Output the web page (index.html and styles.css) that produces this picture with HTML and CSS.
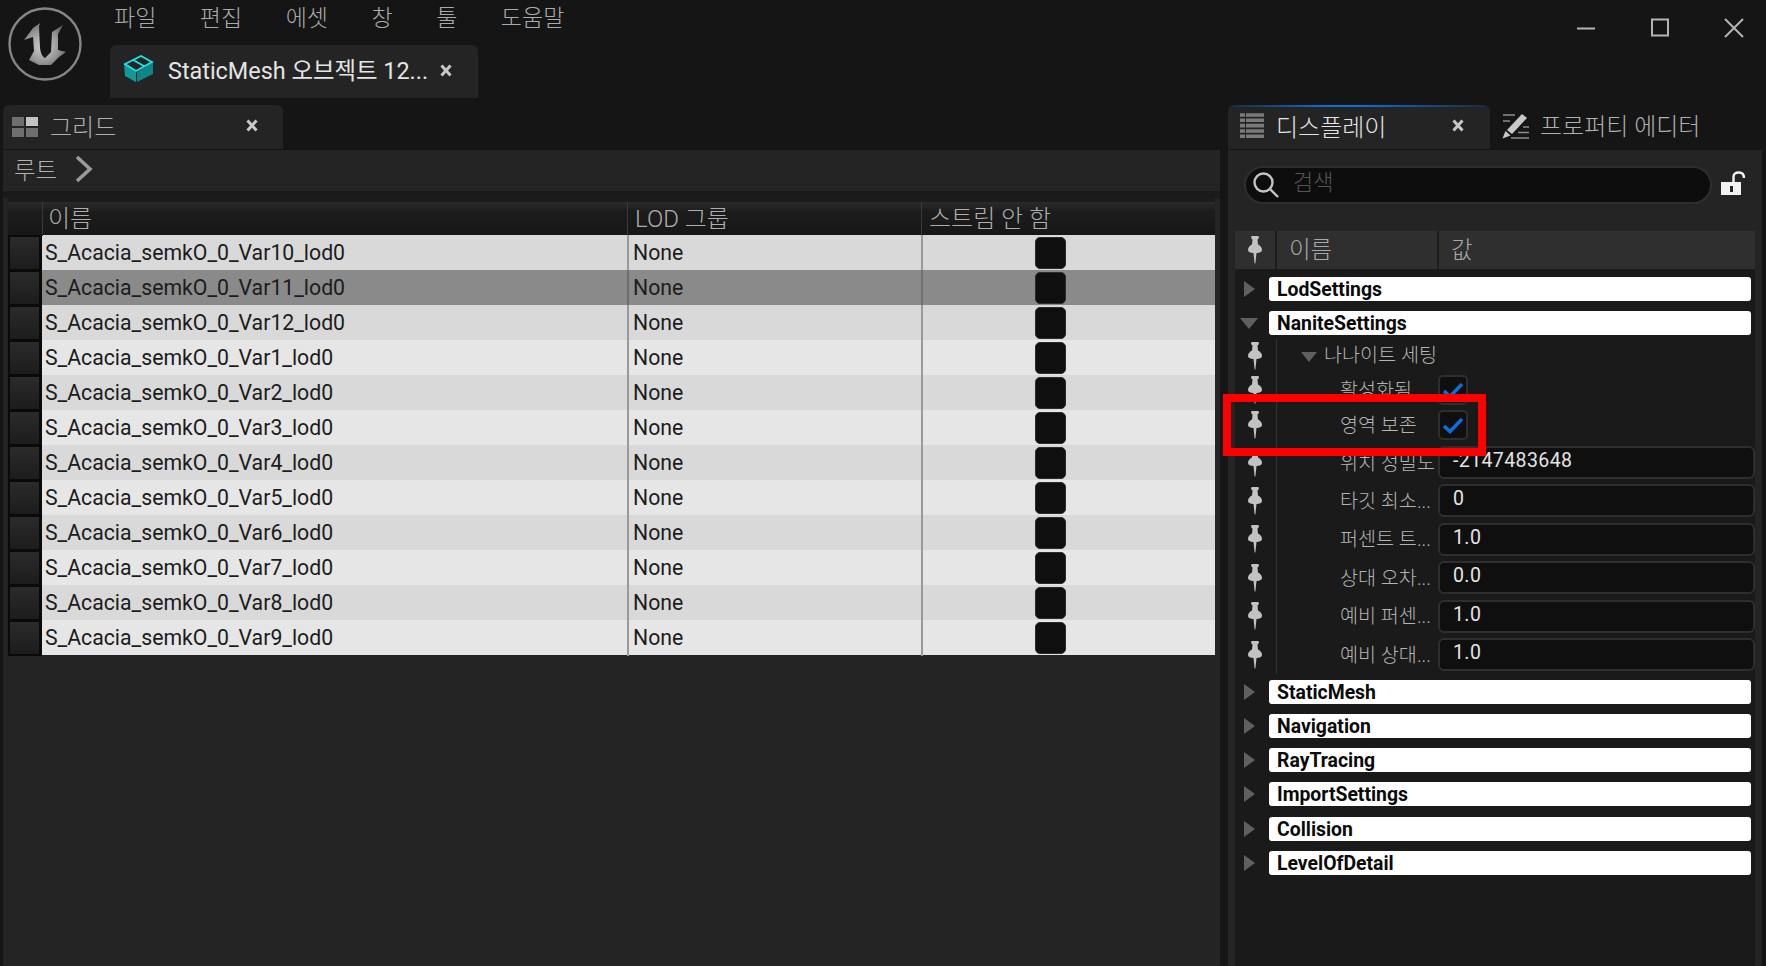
FILE: index.html
```html
<!DOCTYPE html>
<html lang="ko">
<head>
<meta charset="utf-8">
<title>StaticMesh 오브젝트</title>
<link rel="stylesheet" href="styles.css">
</head>
<body>
<div class="app">
  <header class="titlebar">
    <div class="logo">
      <svg width="74" height="74" viewBox="7 7 74 74">
        <defs>
          <radialGradient id="ug" cx="0.45" cy="0.55" r="0.6">
            <stop offset="0" stop-color="#d2d2d2"/>
            <stop offset="0.6" stop-color="#9a9a9a"/>
            <stop offset="1" stop-color="#686868"/>
          </radialGradient>
        </defs>
        <circle cx="44" cy="44" r="35.5" fill="none" stroke="#858585" stroke-width="2.4"/>
        <path fill="url(#ug)" d="M23 40 L32 28 L39 23 L38 27 L39 48 Q40 56 44 58 L50 52 L51 32 L62 25 L57 34 L57 50 L65 52 L58 57 L50 65 L38 65 L28 60 L33 51 L32 37 Z"/>
      </svg>
    </div>
    <div class="title-main">
      <nav class="menu">
        <span class="menu-item">파일</span>
        <span class="menu-item">편집</span>
        <span class="menu-item">에셋</span>
        <span class="menu-item">창</span>
        <span class="menu-item">툴</span>
        <span class="menu-item">도움말</span>
      </nav>
      <div class="doc-tab">
        <svg class="doc-icon" width="32" height="32" viewBox="12 12 32 32">
          <path fill="#129a9a" d="M14 23 L26 31 L26 41 L15 35 Z"/>
          <path fill="#0f8686" d="M27 31 L43 21 L43 33 L27 41 Z"/>
          <path fill="none" stroke="#1fe6e6" stroke-width="1.8" d="M15 23 L31 15 L42 21 L26 30 Z M23 19 L34 25"/>
        </svg>
        <span class="doc-title">StaticMesh 오브젝트 12...</span>
        <svg class="x-icon doc-x" width="12" height="13" viewBox="0 0 12 13"><path d="M1.5 1.5 L10.5 11.5 M10.5 1.5 L1.5 11.5"/></svg>
      </div>
    </div>
    <div class="win-controls">
      <svg class="win-icon" width="20" height="20" viewBox="0 0 20 20"><path d="M1 10.5 H19"/></svg>
      <svg class="win-icon" width="20" height="20" viewBox="0 0 20 20"><rect x="2" y="1.5" width="16" height="16"/></svg>
      <svg class="win-icon" width="20" height="20" viewBox="0 0 20 20"><path d="M1 1 L19 19 M19 1 L1 19"/></svg>
    </div>
  </header>

  <main class="workspace">
    <section class="panel panel-left">
      <div class="tab-strip">
        <div class="tab tab-grid">
          <svg class="grid-icon" width="26" height="20" viewBox="0 0 26 20">
            <rect x="0" y="0" width="12" height="9" fill="#6f6f6f"/>
            <rect x="14" y="0" width="12" height="9" fill="#c4c4c4"/>
            <rect x="0" y="11" width="12" height="9" fill="#6f6f6f"/>
            <rect x="14" y="11" width="12" height="9" fill="#6f6f6f"/>
          </svg>
          <span class="tab-label tab-label-dim">그리드</span>
          <svg class="x-icon tab-x" width="12" height="13" viewBox="0 0 12 13"><path d="M1.5 1.5 L10.5 11.5 M10.5 1.5 L1.5 11.5"/></svg>
        </div>
      </div>
      <div class="crumb">
        <span class="crumb-text">루트</span>
        <svg class="crumb-chevron" width="18" height="28" viewBox="0 0 18 28"><path d="M2 2 L15 14 L2 26"/></svg>
      </div>
      <div class="table-wrap">
        <div class="table">
          <div class="thead">
            <div class="th th-index"></div>
            <div class="th th-name">이름</div>
            <div class="th">LOD 그룹</div>
            <div class="th">스트림 안 함</div>
          </div>
          <div class="row"><div class="idx"></div><div class="cell name">S_Acacia_semkO_0_Var10_lod0</div><div class="cell lod">None</div><div class="cell box"><span class="cbx"></span></div></div>
          <div class="row row-selected"><div class="idx"></div><div class="cell name">S_Acacia_semkO_0_Var11_lod0</div><div class="cell lod">None</div><div class="cell box"><span class="cbx"></span></div></div>
          <div class="row"><div class="idx"></div><div class="cell name">S_Acacia_semkO_0_Var12_lod0</div><div class="cell lod">None</div><div class="cell box"><span class="cbx"></span></div></div>
          <div class="row"><div class="idx"></div><div class="cell name">S_Acacia_semkO_0_Var1_lod0</div><div class="cell lod">None</div><div class="cell box"><span class="cbx"></span></div></div>
          <div class="row"><div class="idx"></div><div class="cell name">S_Acacia_semkO_0_Var2_lod0</div><div class="cell lod">None</div><div class="cell box"><span class="cbx"></span></div></div>
          <div class="row"><div class="idx"></div><div class="cell name">S_Acacia_semkO_0_Var3_lod0</div><div class="cell lod">None</div><div class="cell box"><span class="cbx"></span></div></div>
          <div class="row"><div class="idx"></div><div class="cell name">S_Acacia_semkO_0_Var4_lod0</div><div class="cell lod">None</div><div class="cell box"><span class="cbx"></span></div></div>
          <div class="row"><div class="idx"></div><div class="cell name">S_Acacia_semkO_0_Var5_lod0</div><div class="cell lod">None</div><div class="cell box"><span class="cbx"></span></div></div>
          <div class="row"><div class="idx"></div><div class="cell name">S_Acacia_semkO_0_Var6_lod0</div><div class="cell lod">None</div><div class="cell box"><span class="cbx"></span></div></div>
          <div class="row"><div class="idx"></div><div class="cell name">S_Acacia_semkO_0_Var7_lod0</div><div class="cell lod">None</div><div class="cell box"><span class="cbx"></span></div></div>
          <div class="row"><div class="idx"></div><div class="cell name">S_Acacia_semkO_0_Var8_lod0</div><div class="cell lod">None</div><div class="cell box"><span class="cbx"></span></div></div>
          <div class="row"><div class="idx"></div><div class="cell name">S_Acacia_semkO_0_Var9_lod0</div><div class="cell lod">None</div><div class="cell box"><span class="cbx"></span></div></div>
        </div>
      </div>
    </section>

    <section class="panel panel-right">
      <div class="tab-strip">
        <div class="tab tab-display">
          <svg class="list-icon" width="24" height="26" viewBox="0 0 24 26">
            <path d="M0 2 H24 M0 7.3 H24 M0 12.6 H24 M0 18 H24 M0 23.3 H24"/>
            <path class="list-gap" d="M5.5 0 V26"/>
          </svg>
          <span class="tab-label">디스플레이</span>
          <svg class="x-icon tab-x" width="12" height="13" viewBox="0 0 12 13"><path d="M1.5 1.5 L10.5 11.5 M10.5 1.5 L1.5 11.5"/></svg>
        </div>
        <div class="tab-plain">
          <svg class="edit-icon" width="30" height="30" viewBox="10 10 30 30">
            <path fill="#c8c8c8" d="M17 30 L32 14 L37 18 L22 34 Z"/>
            <path fill="#c8c8c8" d="M12.5 38.5 L15.5 31 L20.5 35.5 Z"/>
            <path class="edit-lines" d="M13 15 H25 M13 21 H20 M33 27 H39 M28 32.5 H39 M21 38 H39"/>
          </svg>
          <span class="tab-label tab-label-dim">프로퍼티 에디터</span>
        </div>
      </div>
      <div class="details">
        <div class="search-row">
          <div class="search">
            <svg class="search-icon" width="26" height="26" viewBox="0 0 26 26"><circle cx="10.5" cy="10.5" r="9"/><path d="M17 17 L25 25"/></svg>
            <span class="search-text">검색</span>
          </div>
          <svg class="lock" width="26" height="26" viewBox="0 0 26 26">
            <path class="lock-shackle" d="M13.5 11 V6 Q13.5 1.5 19 1.5 Q24 1.5 24 7"/>
            <path fill="#f2f2f2" d="M1 11 H21 V24 H1 Z"/>
            <rect x="10" y="15" width="3" height="6" fill="#242424"/>
          </svg>
        </div>
        <div class="prop-head">
          <div class="ph ph-pin">
            <svg class="pin" viewBox="0 0 16 28"><use href="#pin-shape"/></svg>
          </div>
          <div class="ph ph-name">이름</div>
          <div class="ph ph-value">값</div>
        </div>
        <div class="prop-list">
          <svg class="pin-defs" width="0" height="0">
            <symbol id="pin-shape" viewBox="0 0 16 28">
              <path d="M4.5 0 H11.5 L12 2 L10.5 3.5 L11 8.5 Q15 10.5 15 14 Q15 16.5 9.5 17 L8.4 27.5 H7.6 L6.5 17 Q1 16.5 1 14 Q1 10.5 5 8.5 L5.5 3.5 L4 2 Z"/>
            </symbol>
          </svg>
          <div class="cat"><span class="arrow arrow-right"></span><div class="cat-box">LodSettings</div></div>
          <div class="cat"><span class="arrow arrow-down"></span><div class="cat-box">NaniteSettings</div></div>
          <div class="group">
            <div class="prop prop-h34">
              <div class="pin-col"><svg class="pin" viewBox="0 0 16 28"><use href="#pin-shape"/></svg></div>
              <div class="prop-name group-name"><span class="arrow arrow-down arrow-small"></span>나나이트 세팅</div>
            </div>
            <div class="prop prop-h34">
              <div class="pin-col"><svg class="pin" viewBox="0 0 16 28"><use href="#pin-shape"/></svg></div>
              <div class="prop-name">활성화됨</div>
              <div class="check"><svg width="22" height="18" viewBox="0 0 22 18"><path d="M2 10 L8 15.5 L20 3"/></svg></div>
            </div>
            <div class="prop prop-h36">
              <div class="pin-col"><svg class="pin" viewBox="0 0 16 28"><use href="#pin-shape"/></svg></div>
              <div class="prop-name">영역 보존</div>
              <div class="check"><svg width="22" height="18" viewBox="0 0 22 18"><path d="M2 10 L8 15.5 L20 3"/></svg></div>
            </div>
            <div class="prop">
              <div class="pin-col"><svg class="pin" viewBox="0 0 16 28"><use href="#pin-shape"/></svg></div>
              <div class="prop-name">위치 정밀도</div>
              <div class="field">-2147483648</div>
            </div>
            <div class="prop">
              <div class="pin-col"><svg class="pin" viewBox="0 0 16 28"><use href="#pin-shape"/></svg></div>
              <div class="prop-name">타깃 최소...</div>
              <div class="field">0</div>
            </div>
            <div class="prop">
              <div class="pin-col"><svg class="pin" viewBox="0 0 16 28"><use href="#pin-shape"/></svg></div>
              <div class="prop-name">퍼센트 트...</div>
              <div class="field">1.0</div>
            </div>
            <div class="prop">
              <div class="pin-col"><svg class="pin" viewBox="0 0 16 28"><use href="#pin-shape"/></svg></div>
              <div class="prop-name">상대 오차...</div>
              <div class="field">0.0</div>
            </div>
            <div class="prop">
              <div class="pin-col"><svg class="pin" viewBox="0 0 16 28"><use href="#pin-shape"/></svg></div>
              <div class="prop-name">예비 퍼센...</div>
              <div class="field">1.0</div>
            </div>
            <div class="prop">
              <div class="pin-col"><svg class="pin" viewBox="0 0 16 28"><use href="#pin-shape"/></svg></div>
              <div class="prop-name">예비 상대...</div>
              <div class="field">1.0</div>
            </div>
          </div>
          <div class="cat"><span class="arrow arrow-right"></span><div class="cat-box">StaticMesh</div></div>
          <div class="cat"><span class="arrow arrow-right"></span><div class="cat-box">Navigation</div></div>
          <div class="cat"><span class="arrow arrow-right"></span><div class="cat-box">RayTracing</div></div>
          <div class="cat"><span class="arrow arrow-right"></span><div class="cat-box">ImportSettings</div></div>
          <div class="cat"><span class="arrow arrow-right"></span><div class="cat-box">Collision</div></div>
          <div class="cat"><span class="arrow arrow-right"></span><div class="cat-box">LevelOfDetail</div></div>
        </div>
      </div>
    </section>
  </main>
  <div class="highlight"></div>
</div>
</body>
</html>
```

FILE: styles.css
```css
* { box-sizing: border-box; }
html, body {
  margin: 0;
  height: 100%;
  background: #151515;
  overflow: hidden;
}
body {
  font-family: Roboto, "Noto Sans CJK KR", sans-serif;
  color: #c0c0c0;
}
.app {
  position: relative;
  width: 1766px;
  height: 966px;
  display: flex;
  flex-direction: column;
  overflow: hidden;
}

/* Title bar */
.titlebar {
  height: 105px;
  flex: none;
  display: flex;
  padding-top: 7px;
}
.logo { width: 110px; flex: none; padding-left: 8px; }
.logo svg { display: block; }
.title-main {
  width: 368px;
  flex: none;
  margin-top: -7px;
  display: flex;
  flex-direction: column;
}
.menu {
  height: 45px;
  flex: none;
  display: flex;
  padding-left: 4px;
  gap: 43.5px;
  align-items: flex-start;
}
.menu-item {
  flex: none;
  font-size: 23px;
  line-height: 38px;
  font-weight: 300;
  color: #aaa;
  white-space: nowrap;
}
.doc-tab {
  height: 53px;
  background: #242424;
  border-radius: 6px 6px 0 0;
  display: flex;
  align-items: center;
  padding: 0 26px 6px 12px;
}
.doc-icon { flex: none; }
.doc-title {
  margin-left: 14px;
  font-size: 23.4px;
  color: #e4e4e4;
  white-space: nowrap;
  flex: 1;
}
.doc-title, .tab-label { font-weight: 400; }
.doc-x { margin-top: 4px; }
.x-icon path {
  fill: none;
  stroke: #c8c8c8;
  stroke-width: 3;
}
.win-controls {
  margin-left: auto;
  margin-top: 11px;
  padding-right: 22px;
  display: flex;
  gap: 54px;
  align-items: flex-start;
}
.win-icon { fill: none; stroke: #b4b4b4; stroke-width: 2; }

/* Workspace */
.workspace {
  flex: 1;
  display: flex;
  padding-left: 3px;
  gap: 8px;
  min-height: 0;
}
.panel { display: flex; flex-direction: column; }
.panel-left { width: 1217px; }
.panel-right { width: 534px; }
.tab-strip {
  height: 45px;
  flex: none;
  display: flex;
  padding-bottom: 1px;
}
.tab {
  width: 280px;
  background: #242424;
  border-radius: 6px 6px 0 0;
  display: flex;
  align-items: center;
  padding: 0 25px 3px 9px;
}
.tab-grid .grid-icon { margin-top: 3px; }
.tab-label {
  font-size: 24px;
  font-weight: 300;
  color: #e4e4e4;
  margin-left: 12px;
  flex: 1;
  white-space: nowrap;
}
.tab-label-dim { color: #b0b0b0; }
.tab-x { flex: none; }
.tab-display {
  width: 262px;
  padding: 0 26px 3px 12px;
  background: linear-gradient(to right, #1d2a38, #0a70e0 38%, #0a70e0 50%, #1d2a38) top/100% 2px no-repeat, #242424;
}
.list-icon { flex: none; }
.list-icon path { fill: none; stroke: #7a7a7a; stroke-width: 3.6; }
.list-icon .list-gap { stroke: #242424; stroke-width: 1; }
.tab-plain {
  display: flex;
  align-items: center;
  padding: 0 0 5px 10px;
  height: 44px;
}
.edit-lines { fill: none; stroke: #8c8c8c; stroke-width: 1.6; }
.tab-plain .tab-label { margin-left: 10px; }

/* Left panel */
.crumb {
  height: 41px;
  flex: none;
  background: #242424;
  display: flex;
  align-items: center;
  padding: 0 0 4px 11px;
}
.crumb-text { font-size: 23.5px; font-weight: 300; color: #b0b0b0; }
.crumb-chevron { margin-left: 18px; fill: none; stroke: #9a9a9a; stroke-width: 3.6; }
.table-wrap {
  flex: 1;
  background: #242424;
  border-top: 7px solid #1a1a1a;
  padding: 0 5px 0 5px;
}
.table {
  background: #1c1c1c;
  padding-top: 4px;
}
.thead, .row {
  display: grid;
  grid-template-columns: 34px 585px 294px 294px;
}
.thead {
  height: 33px;
  background: linear-gradient(#2b2b2b, #1c1c1c 30%, #171717);
}
.th {
  font-size: 24px;
  font-weight: 300;
  line-height: 34px;
  color: #aeaeae;
  padding-left: 7px;
  border-left: 1px solid #3a3a3a;
}
.th-name { padding-left: 5px; }
.th-index { border-left: 0; border-right: 0; }
.row {
  height: 35px;
  background: #d9d9d9;
  color: #1c1c1c;
}
.row:nth-child(odd) { background: #e6e6e6; }
.row.row-selected { background: #8a8a8a; }
.idx {
  background: linear-gradient(#2b2b2b, #1c1c1c);
  border: 2px solid #0a0a0a;
  border-right-width: 3px;
}
.cell {
  font-size: 21.25px;
  line-height: 36px;
  white-space: nowrap;
}
.name { padding-left: 3px; }
.lod { padding-left: 4px; border-left: 2px solid #9a9a9a; }
.box {
  border-left: 2px solid #9a9a9a;
  display: flex;
  justify-content: center;
  align-items: center;
  padding-right: 37px;
}
.row-selected .lod, .row-selected .box { border-left-color: #6e6e6e; }
.cbx {
  width: 31px;
  height: 32px;
  background: #0f0f0f;
  border: 1px solid #2c2c2c;
  border-radius: 5px;
}

/* Right panel */
.details {
  flex: 1;
  background: #242424;
  padding: 0 7px 0 7px;
  display: flex;
  flex-direction: column;
  min-height: 0;
}
.search-row {
  height: 81px;
  flex: none;
  display: flex;
  padding: 16px 9px 0 9px;
  align-items: flex-start;
}
.search {
  width: 469px;
  height: 38px;
  background: #0d0d0d;
  border: 2px solid #2e2e2e;
  border-radius: 19px;
  display: flex;
  align-items: center;
  padding-left: 7px;
}
.search-icon { flex: none; fill: none; stroke: #c4c4c4; stroke-width: 2.4; }
.search-text {
  font-size: 22px;
  font-weight: 300;
  color: #555;
  margin-left: 14px;
  line-height: 30px;
  margin-top: -5px;
}
.lock { margin: 5px 0 0 8px; flex: none; }
.lock-shackle { fill: none; stroke: #f2f2f2; stroke-width: 2.4; }
.prop-head {
  height: 38px;
  flex: none;
  background: #2f2f2f;
  display: grid;
  grid-template-columns: 42px 162px 1fr;
}
.ph {
  font-size: 23.5px;
  font-weight: 300;
  color: #a8a8a8;
  line-height: 38px;
  padding-left: 12px;
  border-right: 2px solid #1e1e1e;
}
.ph-value { border-right: 0; padding-left: 12px; }
.ph-pin { padding-left: 12px; display: flex; align-items: center; }
.pin { width: 16px; height: 28px; fill: #c2c2c2; display: block; }
.pin-defs { position: absolute; }
.prop-list {
  flex: 1;
  background: #1a1a1a;
  padding-top: 3px;
}
.cat {
  height: 34.2px;
  display: flex;
  align-items: center;
}
.arrow { display: block; flex: none; width: 0; height: 0; }
.arrow-right {
  margin: 0 14px 0 9px;
  border-left: 11px solid #606060;
  border-top: 8.5px solid transparent;
  border-bottom: 8.5px solid transparent;
}
.arrow-down {
  margin: 0 11px 0 5px;
  border-top: 11px solid #606060;
  border-left: 9px solid transparent;
  border-right: 9px solid transparent;
}
.arrow-small {
  margin: 1px 7px 0 -39px;
  border-top-width: 10px;
  border-left-width: 8px;
  border-right-width: 8px;
}
.cat-box {
  height: 24px;
  flex: none;
  width: 482px;
  background: #fff;
  border-radius: 3px;
  color: #0a0a0a;
  font-size: 19.4px;
  font-weight: 700;
  line-height: 26px;
  padding-left: 8px;
  white-space: nowrap;
}
.group { margin: -1px 0 1px; }
.prop {
  height: 38.4px;
  display: grid;
  grid-template-columns: 42px 161px 317px;
  align-items: center;
}
.prop-h34 { height: 34px; }
.prop-h36 { height: 36px; }
.pin-col {
  height: 100%;
  border-right: 1px solid #333;
  padding-left: 12px;
  display: flex;
  align-items: center;
}
.prop-name {
  font-size: 19.6px;
  line-height: 26px;
  font-weight: 300;
  color: #b4b4b4;
  padding-left: 63px;
  margin-top: 2px;
  white-space: nowrap;
  overflow: hidden;
}
.group-name {
  overflow: visible;
  display: flex;
  align-items: center;
  margin-top: 0;
  padding-left: 63px;
}
.check {
  width: 30px;
  height: 30px;
  background: #0f0f0f;
  border: 2px solid #2e2e2e;
  border-radius: 5px;
  display: flex;
  align-items: center;
  justify-content: center;
}
.check path { fill: none; stroke: #0a70e0; stroke-width: 3.4; }
.field {
  height: 33px;
  background: #0f0f0f;
  border: 2px solid #2e2e2e;
  border-radius: 6px;
  color: #e4e4e4;
  font-size: 19.5px;
  line-height: 25px;
  padding-left: 13px;
  letter-spacing: 0.4px;
}

/* Red annotation over the details panel */
.highlight {
  position: absolute;
  left: 1223px;
  top: 394px;
  width: 263px;
  height: 62px;
  border: 8px solid #ff0000;
  pointer-events: none;
}
```
